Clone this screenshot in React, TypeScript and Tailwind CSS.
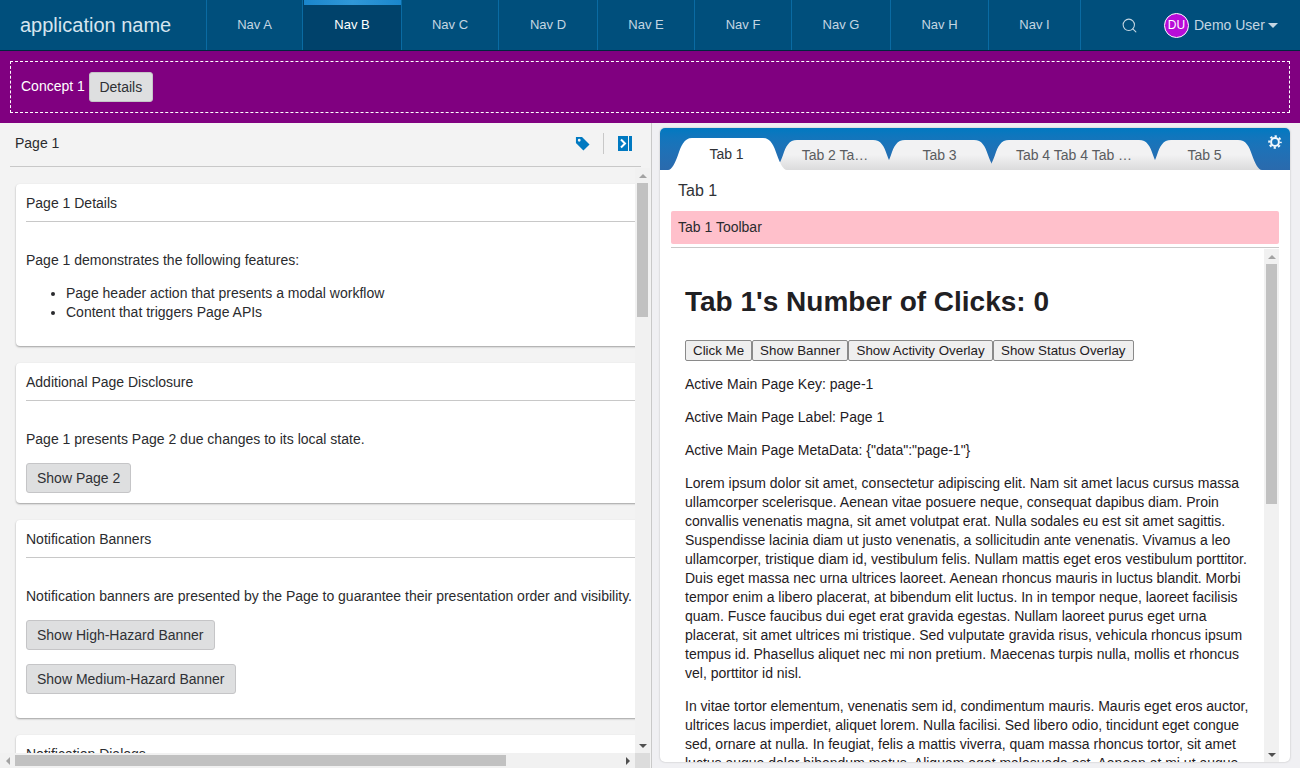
import { Search } from 'lucide-react';

const font = 'font-["Liberation_Sans",Arial,sans-serif]';

const navItems = [
  { label: 'Nav A', width: 'w-[96px]' },
  { label: 'Nav B', width: 'w-[99px]' },
  { label: 'Nav C', width: 'w-[97px]' },
  { label: 'Nav D', width: 'w-[99px]' },
  { label: 'Nav E', width: 'w-[97px]' },
  { label: 'Nav F', width: 'w-[97px]' },
  { label: 'Nav G', width: 'w-[99px]' },
  { label: 'Nav H', width: 'w-[98px]' },
  { label: 'Nav I', width: 'w-[92px]' },
];

const tabs = [
  { label: 'Tab 1', px: 119, width: 'w-[119px] pr-[2px]', layer: 'z-50', overlap: '-mr-[14px]', active: true },
  { label: 'Tab 2 Ta…', px: 124, width: 'w-[124px]', layer: 'z-40', overlap: '-mr-[16px]', active: false },
  { label: 'Tab 3', px: 117, width: 'w-[117px]', layer: 'z-30', overlap: '-mr-[13px]', active: false },
  { label: 'Tab 4 Tab 4 Tab …', px: 178, width: 'w-[178px]', layer: 'z-20', overlap: '-mr-[16px]', active: false },
  { label: 'Tab 5', px: 115, width: 'w-[115px]', layer: 'z-10', overlap: '', active: false },
];

const contentButtons = [
  { label: 'Click Me', padding: 'px-[7px]' },
  { label: 'Show Banner', padding: 'px-[7px]' },
  { label: 'Show Activity Overlay', padding: 'px-[7.4px]' },
  { label: 'Show Status Overlay', padding: 'px-[7px]' },
];

function Btn({ children }: { children: React.ReactNode }) {
  return (
    <button className="block h-[30px] px-[10px] bg-[#dedfe0] border border-[#c5c5c7] rounded-[3px] text-[14px] leading-[28px] text-[#2f3135] whitespace-nowrap">
      {children}
    </button>
  );
}

function Card({ title, children, className }: { title: string; children: React.ReactNode; className?: string }) {
  return (
    <section className={`bg-white rounded-[4px] shadow-[0_1px_2px_rgba(0,0,0,0.35)] px-[10px] mb-[17px] ${className ?? ''}`}>
      <h2 className="h-[38px] leading-[38px] text-[14px] text-[#2a2b2e] border-b border-[#c8c8c8]">{title}</h2>
      {children}
    </section>
  );
}

function Tab({ label, px, width, layer, overlap, active }: (typeof tabs)[number]) {
  const h = active ? 32 : 30;
  const d = `M0 ${h} C4 ${h} 7 ${h - 7} 10 ${h - 15} C13 ${h - 24} 16 0 24 0 L${px - 24} 0 C${px - 16} 0 ${px - 13} ${h - 24} ${px - 10} ${h - 15} C${px - 7} ${h - 7} ${px - 4} ${h} ${px} ${h} Z`;
  return (
    <div className={`relative shrink-0 ${width} ${layer} ${overlap} ${active ? 'h-[32px] text-[#303236]' : 'h-[30px] text-[#5a5c60]'}`}>
      <svg className="absolute inset-0" width={px} height={h} viewBox={`0 0 ${px} ${h}`}>
        <defs>
          <linearGradient id="inactive-tab" x1="0" y1="0" x2="0" y2="1">
            <stop offset="0.5" stopColor="#f2f2f3" />
            <stop offset="1" stopColor="#dbdbdc" />
          </linearGradient>
        </defs>
        <path d={d} fill={active ? '#ffffff' : 'url(#inactive-tab)'} />
      </svg>
      <span className="relative flex h-full items-center justify-center text-[14px] whitespace-nowrap">{label}</span>
    </div>
  );
}

function VScrollbar({ thumb }: { thumb: string }) {
  return (
    <div className="w-[15px] shrink-0 mt-[1px] flex flex-col items-center bg-[#f1f1f1]">
      <div className="h-[15px] shrink-0 flex items-center justify-center">
        <span className="w-0 h-0 border-x-[4px] border-x-transparent border-b-[4px] border-b-[#a3a3a3]" />
      </div>
      <div className={`w-[11px] shrink-0 bg-[#c1c1c1] ${thumb}`} />
      <div className="flex-1" />
      <div className="h-[15px] shrink-0 flex items-center justify-center">
        <span className="w-0 h-0 border-x-[4px] border-x-transparent border-t-[4px] border-t-[#505050]" />
      </div>
    </div>
  );
}

function HScrollbar() {
  return (
    <div className="h-[15px] shrink-0 flex items-center bg-[#f1f1f1]">
      <div className="w-[15px] shrink-0 flex items-center justify-center">
        <span className="w-0 h-0 border-y-[4px] border-y-transparent border-r-[4px] border-r-[#a3a3a3]" />
      </div>
      <div className="w-[491px] h-[11px] bg-[#c1c1c1]" />
      <div className="flex-1" />
      <div className="w-[15px] shrink-0 flex items-center justify-center">
        <span className="w-0 h-0 border-y-[4px] border-y-transparent border-l-[4px] border-l-[#505050]" />
      </div>
      <div className="w-[15px] h-[15px] shrink-0 bg-[#dcdcdc]" />
    </div>
  );
}

export default function App() {
  return (
    <div className={`${font} h-[768px] w-[1300px] overflow-hidden flex flex-col bg-[#f0f0f3] text-[14px] text-[#2a2b2e]`}>
      <header className="h-[51px] shrink-0 flex bg-[#004f7c] border-b border-[#00263d] text-[#c4d6e2]">
        <div className="w-[206px] pl-[20px] text-[20px] leading-[50px] text-[#d6e5ef]">application name</div>
        <nav className="flex border-r border-[#0a6ba3]">
          {navItems.map((item) => (
            <div
              key={item.label}
              className={`relative ${item.width} text-center text-[13px] leading-[50px] border-l border-[#0a6ba3] ${
                item.label === 'Nav B' ? 'bg-[#00426b] text-white' : ''
              }`}
            >
              {item.label === 'Nav B' && (
                <span className="absolute left-[1px] right-0 top-0 h-[5px] bg-gradient-to-r from-[#1a86cc] via-[#3098d8] to-[#1a86cc]" />
              )}
              {item.label}
            </div>
          ))}
        </nav>
        <div className="flex-1 flex items-center">
          <Search className="ml-[40px] w-[17px] h-[17px]" strokeWidth={1.5} />
          <div className="ml-[26px] w-[25px] h-[25px] rounded-full bg-[#b80cd8] border border-white text-[12px] text-white flex items-center justify-center">
            DU
          </div>
          <span className="ml-[5px]">Demo User</span>
          <span className="ml-[3px] w-0 h-0 border-x-[5px] border-x-transparent border-t-[5px] border-t-[#c4d6e2]" />
        </div>
      </header>

      <div className="h-[72px] shrink-0 bg-[#800080] p-[10px]">
        <div className="h-[52px] border border-dashed border-white flex items-center pl-[10px] text-white">
          <span className="-mt-[2px]">Concept 1</span>
          <button className="ml-[4px] h-[30px] w-[64px] bg-[#dedfe0] rounded-[3px] text-[#2f3135] border border-[#c5c5c7]">Details</button>
        </div>
      </div>

      <div className="flex-1 min-h-0 flex">
        <div className="w-[652px] shrink-0 flex flex-col bg-[#f3f3f3] border-r border-[#c9c9c9] pr-[1px]">
          <div className="ml-[10px] mr-[9px] h-[44px] shrink-0 flex items-center border-b border-[#c8c8c8] pl-[5px] pb-[2px]">
            <span className="flex-1">Page 1</span>
            <svg className="w-[15px] h-[15px] mr-[13px]" viewBox="0 0 16 16" fill="#0079c1">
              <path fillRule="evenodd" d="M1 1h6.5L15.5 9 9 15.5 1 7.5V1Zm3.5 2a1.5 1.5 0 1 0 0 3 1.5 1.5 0 0 0 0-3Z" />
            </svg>
            <span className="w-px h-[21px] bg-[#c8c8c8] mr-[14px]" />
            <svg className="mr-[8px]" width="15" height="15" viewBox="0 0 15 15">
              <rect x="0" y="0" width="10" height="15" fill="#0079c1" />
              <rect x="11" y="0" width="3" height="15" fill="#0079c1" />
              <path d="M3 3.5 7 7.5 3 11.5" fill="none" stroke="#ffffff" strokeWidth="2" />
            </svg>
          </div>
          <div className="flex-1 min-h-0 flex flex-col">
            <div className="flex-1 min-h-0 flex">
              <div className="flex-1 min-w-0 overflow-hidden">
                <div className="w-[782px] pl-[16px] pt-[17px] pr-[10px]">
                  <Card title="Page 1 Details" className="h-[162px]">
                    <p className="mt-[28px]">Page 1 demonstrates the following features:</p>
                    <ul className="mt-[13px] pl-[40px] list-disc leading-[19px]">
                      <li>Page header action that presents a modal workflow</li>
                      <li>Content that triggers Page APIs</li>
                    </ul>
                  </Card>
                  <Card title="Additional Page Disclosure" className="h-[140px]">
                    <p className="mt-[28px] mb-[13px]">Page 1 presents Page 2 due changes to its local state.</p>
                    <Btn>Show Page 2</Btn>
                  </Card>
                  <Card title="Notification Banners" className="h-[198px]">
                    <p className="mt-[28px] mb-[13px]">
                      Notification banners are presented by the Page to guarantee their presentation order and visibility.
                    </p>
                    <Btn>Show High-Hazard Banner</Btn>
                    <div className="h-[14px]" />
                    <Btn>Show Medium-Hazard Banner</Btn>
                  </Card>
                  <Card title="Notification Dialogs" className="h-[198px]">
                    <p className="mt-[28px]">Notification dialogs are presented by the Page.</p>
                  </Card>
                </div>
              </div>
              <VScrollbar thumb="h-[134px]" />
            </div>
            <HScrollbar />
          </div>
        </div>

        <div className="flex-1 min-w-0 pl-[8px] pr-[10px] pt-[5px] pb-[6px]">
          <div className="h-full flex flex-col bg-white rounded-[5px] shadow-[0_0_2px_rgba(0,0,0,0.25)] overflow-hidden">
            <div className="relative h-[42px] shrink-0 bg-gradient-to-b from-[#0079c1] to-[#2a6aad] pl-[8px] pt-[10px] flex items-end">
              {tabs.map((tab) => (
                <Tab key={tab.label} {...tab} />
              ))}
              <svg className="absolute right-[8px] top-[7px]" width="14" height="14" viewBox="0 0 14 14" fill="none" stroke="#f2f8fc">
                <circle cx="7" cy="7" r="3.9" strokeWidth="2" />
                <circle cx="7" cy="7" r="5.8" strokeWidth="2" strokeDasharray="2.28 2.28" strokeDashoffset="1.14" />
              </svg>
            </div>
            <div className="flex-1 min-h-0 flex flex-col px-[11px]">
              <div className="h-[41px] shrink-0 pl-[7px] leading-[41px] text-[16px] text-[#303236]">Tab 1</div>
              <div className="h-[33px] shrink-0 pl-[7px] leading-[33px] bg-[#ffc0cb] rounded-[2px]">Tab 1 Toolbar</div>
              <div className="flex-1 min-h-0 mt-[3px] border-t border-[#c8c8c8] flex">
                <div className="flex-1 min-w-0 overflow-hidden px-[14px] pt-[22px] text-[#1f2023] leading-[19px]">
                  <h1 className="text-[28px] font-bold leading-[64px] mb-[6px]">Tab 1's Number of Clicks: 0</h1>
                  <div className="flex h-[21px]">
                    {contentButtons.map((item) => (
                      <button key={item.label} className={`${item.padding} bg-[#efefef] border border-[#8a8a8a] rounded-[2px] text-[13.33px] leading-[19px]`}>
                        {item.label}
                      </button>
                    ))}
                  </div>
                  <p className="mt-[14px]">Active Main Page Key: page-1</p>
                  <p className="mt-[14px]">Active Main Page Label: Page 1</p>
                  <p className="mt-[14px]">Active Main Page MetaData: {'{"data":"page-1"}'}</p>
                  <p className="mt-[14px]">
                    Lorem ipsum dolor sit amet, consectetur adipiscing elit. Nam sit amet lacus cursus massa ullamcorper scelerisque. Aenean vitae posuere neque, consequat dapibus diam. Proin convallis venenatis magna, sit amet volutpat erat. Nulla sodales eu est sit amet sagittis. Suspendisse lacinia diam ut justo venenatis, a sollicitudin ante venenatis. Vivamus a leo ullamcorper, tristique diam id, vestibulum felis. Nullam mattis eget eros vestibulum porttitor. Duis eget massa nec urna ultrices laoreet. Aenean rhoncus mauris in luctus blandit. Morbi tempor enim a libero placerat, at bibendum elit luctus. In in tempor neque, laoreet facilisis quam. Fusce faucibus dui eget erat gravida egestas. Nullam laoreet purus eget urna placerat, sit amet ultrices mi tristique. Sed vulputate gravida risus, vehicula rhoncus ipsum tempus id. Phasellus aliquet nec mi non pretium. Maecenas turpis nulla, mollis et rhoncus vel, porttitor id nisl.
                  </p>
                  <p className="mt-[14px]">
                    In vitae tortor elementum, venenatis sem id, condimentum mauris. Mauris eget eros auctor, ultrices lacus imperdiet, aliquet lorem. Nulla facilisi. Sed libero odio, tincidunt eget congue sed, ornare at nulla. In feugiat, felis a mattis viverra, quam massa rhoncus tortor, sit amet luctus augue dolor bibendum metus. Aliquam eget malesuada est. Aenean at mi ut augue.
                  </p>
                </div>
                <VScrollbar thumb="h-[240px]" />
              </div>
            </div>
          </div>
        </div>
      </div>
    </div>
  );
}
